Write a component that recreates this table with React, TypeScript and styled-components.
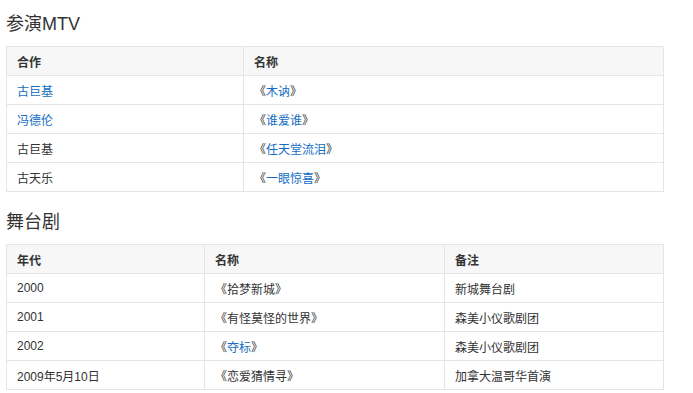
import React from "react";
import styled, { createGlobalStyle } from "styled-components";

const GlobalStyle = createGlobalStyle`
  body {
    margin: 0;
    background: #fff;
    font-family: "Liberation Sans", Arial, "Noto Sans CJK SC", sans-serif;
    color: #333;
  }
`;

const Page = styled.div`
  padding: 0 6px;
`;

const Heading = styled.h3<{ first?: boolean }>`
  font-size: 18px;
  font-weight: normal;
  line-height: 24px;
  margin: ${(p) => (p.first ? "12px" : "18px")} 0 10px;
  color: #333;
`;

const Table = styled.table`
  width: 658px;
  border-collapse: collapse;
  table-layout: fixed;
  font-size: 12px;
`;

// w is the full column width, borders and padding included
const Th = styled.th<{ w?: number }>`
  width: ${(p) => (p.w ? `${p.w - 21}px` : "auto")};
  height: 28px;
  padding: 0 10px;
  text-align: left;
  font-weight: bold;
  background: #f7f7f7;
  border: 1px solid #e5e5e5;
  color: #333;
`;

const Td = styled.td`
  height: 28px;
  padding: 0 10px;
  border: 1px solid #e5e5e5;
  color: #333;
  white-space: nowrap;
`;

const Link = styled.a`
  color: #136ec2;
  text-decoration: none;
`;

const Quote = styled.span`
  display: inline-block;
  width: 12px;
  text-align: center;
`;

type Work = { title: string; link?: boolean };

const Title = ({ title, link }: Work) => (
  <>
    <Quote>《</Quote>
    {link ? <Link href="#">{title}</Link> : title}
    <Quote>》</Quote>
  </>
);

const mtv = [
  { who: "古巨基", whoLink: true, work: { title: "木讷", link: true } },
  { who: "冯德伦", whoLink: true, work: { title: "谁爱谁", link: true } },
  { who: "古巨基", whoLink: false, work: { title: "任天堂流泪", link: true } },
  { who: "古天乐", whoLink: false, work: { title: "一眼惊喜", link: true } },
];

const stage = [
  { year: "2000", work: { title: "拾梦新城" }, note: "新城舞台剧" },
  { year: "2001", work: { title: "有怪莫怪的世界" }, note: "森美小仪歌剧团" },
  { year: "2002", work: { title: "夺标", link: true }, note: "森美小仪歌剧团" },
  { year: "2009年5月10日", work: { title: "恋爱猜情寻" }, note: "加拿大温哥华首演" },
];

export default function App() {
  return (
    <Page>
      <GlobalStyle />
      <Heading first>参演MTV</Heading>
      <Table>
        <thead>
          <tr>
            <Th w={237}>合作</Th>
            <Th>名称</Th>
          </tr>
        </thead>
        <tbody>
          {mtv.map((r, i) => (
            <tr key={i}>
              <Td>{r.whoLink ? <Link href="#">{r.who}</Link> : r.who}</Td>
              <Td>
                <Title {...r.work} />
              </Td>
            </tr>
          ))}
        </tbody>
      </Table>

      <Heading>舞台剧</Heading>
      <Table>
        <thead>
          <tr>
            <Th w={198}>年代</Th>
            <Th w={240}>名称</Th>
            <Th>备注</Th>
          </tr>
        </thead>
        <tbody>
          {stage.map((r, i) => (
            <tr key={i}>
              <Td>{r.year}</Td>
              <Td>
                <Title {...r.work} />
              </Td>
              <Td>{r.note}</Td>
            </tr>
          ))}
        </tbody>
      </Table>
    </Page>
  );
}
